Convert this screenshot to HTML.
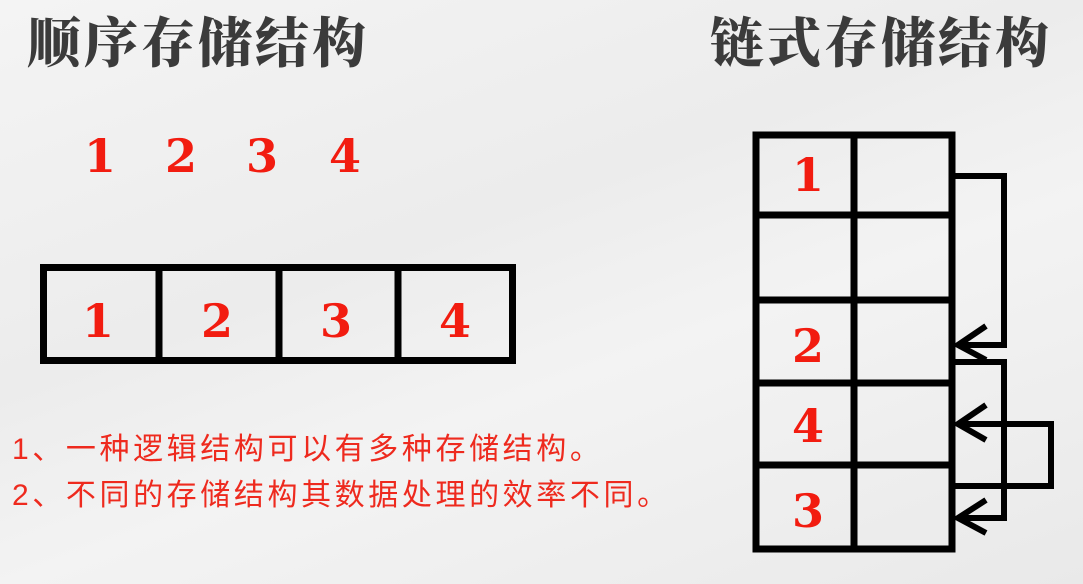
<!DOCTYPE html>
<html><head><meta charset="utf-8"><style>
html,body{margin:0;padding:0}
body{width:1083px;height:584px;overflow:hidden;background:linear-gradient(160deg,#f4f4f4 0%,#ececec 40%,#f3f3f3 60%,#e9e9e9 100%);position:relative;font-family:"Liberation Sans","Noto Sans CJK SC",sans-serif}
.t{position:absolute;font-family:"Liberation Serif","Noto Serif CJK SC",serif;font-weight:900;color:#3b3b3b;font-size:54px;line-height:1;letter-spacing:3px}
.n{font-family:"DejaVu Serif","Liberation Serif",serif;font-weight:bold;fill:#f21c10;font-size:46px}
.p{position:absolute;left:12px;color:#ee2a1e;font-size:30px;line-height:1;letter-spacing:3.6px;white-space:nowrap}
</style></head><body>
<div class="t" style="left:27px;top:17px">顺序存储结构</div>
<div class="t" style="left:710px;top:17px">链式存储结构</div>
<div class="p" style="top:435px">1、一种逻辑结构可以有多种存储结构。</div>
<div class="p" style="top:481px">2、不同的存储结构其数据处理的效率不同。</div>
<svg width="1083" height="584" style="position:absolute;left:0;top:0">
<g class="n" text-anchor="middle">
<text x="100" y="172">1</text><text x="181" y="172">2</text><text x="262" y="172">3</text><text x="345" y="172">4</text>
<text x="98" y="337">1</text><text x="217" y="337">2</text><text x="336" y="337">3</text><text x="455" y="337">4</text>
<text x="808" y="191">1</text><text x="808" y="362">2</text><text x="808" y="442">4</text><text x="808" y="527">3</text>
</g>
<g fill="none" stroke="#000" stroke-width="7">
<rect x="43.5" y="267.5" width="469" height="93"/>
<line x1="159" y1="267" x2="159" y2="361"/><line x1="279" y1="267" x2="279" y2="361"/><line x1="398" y1="267" x2="398" y2="361"/>
<rect x="756" y="135" width="196" height="414"/>
<line x1="854" y1="135" x2="854" y2="549"/>
<line x1="756" y1="215" x2="952" y2="215"/><line x1="756" y1="300" x2="952" y2="300"/><line x1="756" y1="383" x2="952" y2="383"/><line x1="756" y1="465" x2="952" y2="465"/>
</g>
<g fill="none" stroke="#000" stroke-width="6" stroke-linejoin="miter">
<polyline points="955,176 1004,176 1004,345 958,345"/>
<polyline points="986,326 958,345 986,360"/>
<polyline points="955,362 1004,362 1004,518 958,518"/>
<polyline points="986,500 958,518 986,533"/>
<polyline points="955,486 1051,486 1051,424 958,424"/>
<polyline points="986,405 958,424 986,440"/>
</g>
</svg>
</body></html>
